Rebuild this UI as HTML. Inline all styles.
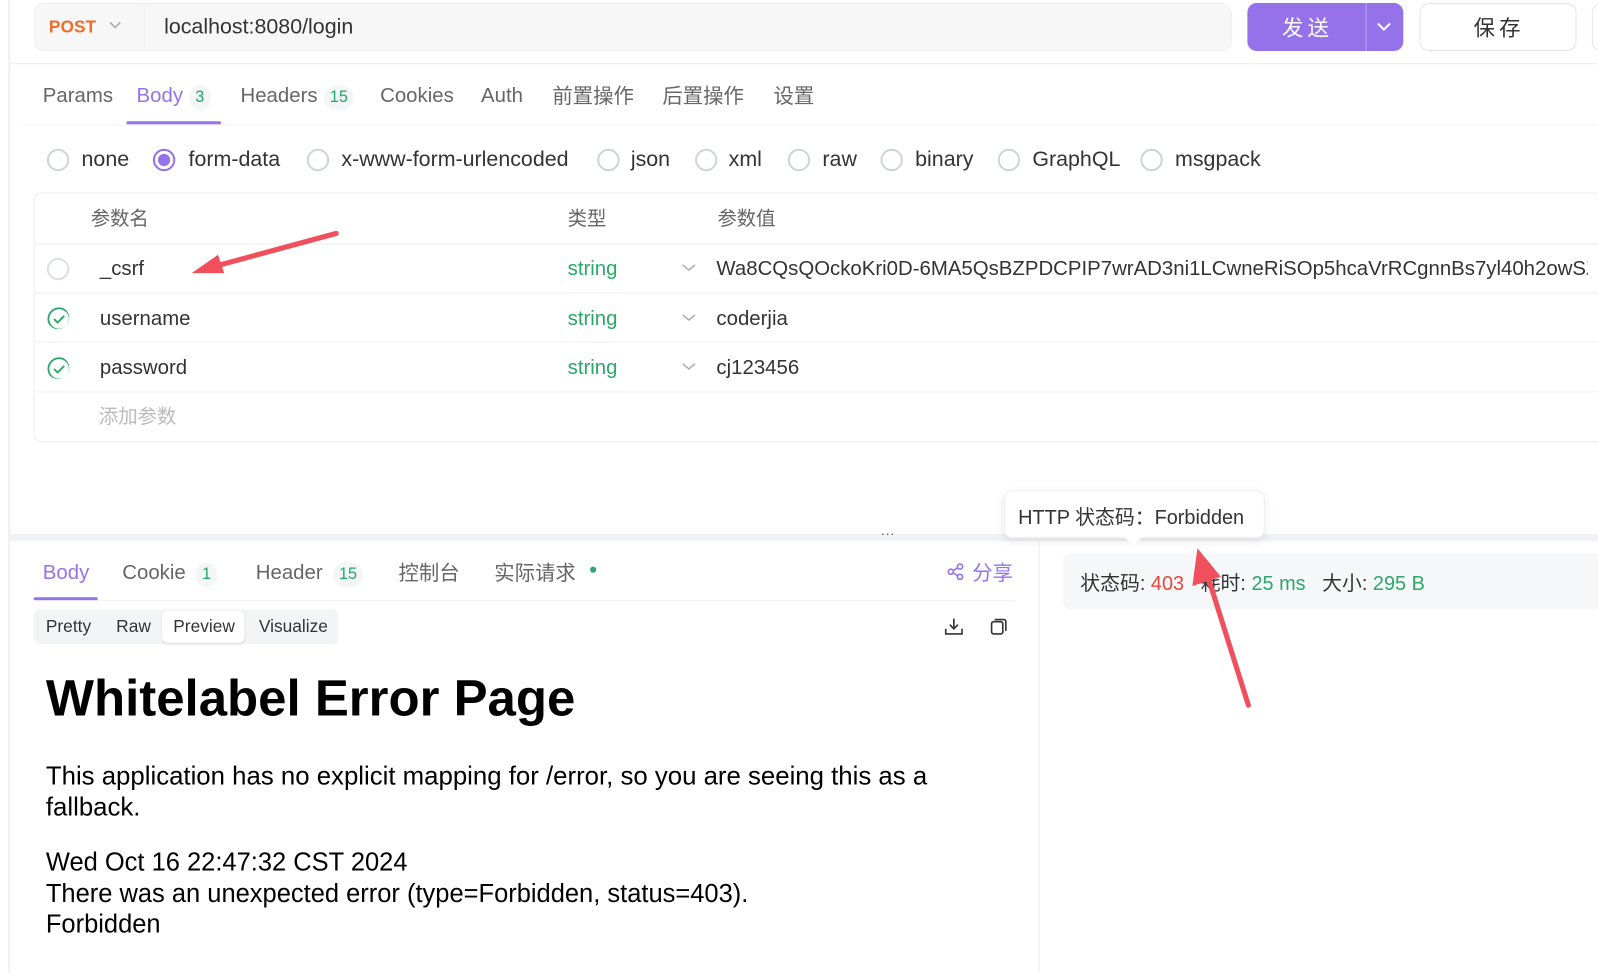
<!DOCTYPE html>
<html><head><meta charset="utf-8"><style>
*{box-sizing:border-box;margin:0;padding:0}
body{width:1598px;height:973px;overflow:hidden;background:#fff;font-family:"Liberation Sans","Noto Sans CJK SC",sans-serif;color:#333;position:relative}
#w{position:absolute;left:0;top:0;width:1568px;height:955px;transform:scale(1.0191);transform-origin:0 0;overflow:hidden}
.a{position:absolute;white-space:nowrap}
.g{color:#666}
.badge{display:inline-block;background:#f4f5f6;border-radius:12px;padding:0 6px;color:#22a86a;font-size:16px;margin-left:6px;line-height:24px}
.radio{position:absolute;width:22px;height:22px;border:2px solid #cfd3da;border-radius:50%}
.row{position:absolute;left:34px;width:1570px;border-top:1px solid #eceef1;height:48px}
.chk{position:absolute;width:22px;height:22px;border-radius:50%}
</style></head><body><div id="w">
<div class="a" style="left:8px;top:0;width:2px;height:973px;background:#eef0f2"></div>
<div class="a" style="left:33px;top:3px;width:1176px;height:47px;background:#f7f7f8;border-radius:10px;border:1px solid #f0f0f0"></div>
<div class="a" style="left:141px;top:3px;width:1px;height:47px;background:#ececec"></div>
<div class="a" style="left:48px;top:17px;font-size:17px;font-weight:bold;color:#f26b2a">POST</div>
<svg class="a" style="left:106px;top:20px" width="14" height="10"><path d="M2 2l5 5 5-5" stroke="#aaa" stroke-width="1.5" fill="none"/></svg>
<div class="a" style="left:161px;top:15px;font-size:21px;color:#333">localhost:8080/login</div>
<div class="a" style="left:1224px;top:3px;width:153px;height:47px;background:#9672ea;border-radius:9px"></div>
<div class="a" style="left:1340px;top:3px;width:1px;height:47px;background:#b9a2f2"></div>
<div class="a" style="left:1258px;top:12px;font-size:21px;color:#fff;letter-spacing:4px">发送</div>
<svg class="a" style="left:1350px;top:20px" width="16" height="12"><path d="M2 3l6 6 6-6" stroke="#fff" stroke-width="2" fill="none"/></svg>
<div class="a" style="left:1393px;top:3px;width:154px;height:47px;border:1px solid #e6e6e6;border-radius:9px"></div>
<div class="a" style="left:1446px;top:12px;font-size:21px;color:#333;letter-spacing:4px">保存</div>
<div class="a" style="left:1562px;top:3px;width:40px;height:47px;border:1px solid #e6e6e6;border-radius:9px"></div>
<div class="a" style="left:10px;top:62px;width:1600px;height:1px;background:#eeeeee"></div>
<div class="a g" style="left:42px;top:83px;font-size:20px">Params</div>
<div class="a" style="left:134px;top:83px;font-size:20px;color:#9672ea">Body<span class="badge">3</span></div>
<div class="a" style="left:124px;top:119px;width:93px;height:3px;background:#9672ea;border-radius:2px"></div>
<div class="a g" style="left:236px;top:83px;font-size:20px">Headers<span class="badge">15</span></div>
<div class="a g" style="left:373px;top:83px;font-size:20px">Cookies</div>
<div class="a g" style="left:472px;top:83px;font-size:20px">Auth</div>
<div class="a g" style="left:542px;top:78px;font-size:20px">前置操作</div>
<div class="a g" style="left:650px;top:78px;font-size:20px">后置操作</div>
<div class="a g" style="left:759px;top:78px;font-size:20px">设置</div>
<div class="a" style="left:22px;top:122px;width:1600px;height:1px;background:#eeeeee"></div>
<div class="radio" style="left:46px;top:146px"></div><div class="a" style="left:80px;top:145px;font-size:21px">none</div>
<div class="radio" style="left:150px;top:146px;border-color:#9672ea"><div style="margin:3px;width:12px;height:12px;border-radius:50%;background:#9672ea"></div></div><div class="a" style="left:185px;top:145px;font-size:21px">form-data</div>
<div class="radio" style="left:301px;top:146px"></div><div class="a" style="left:335px;top:145px;font-size:21px">x-www-form-urlencoded</div>
<div class="radio" style="left:586px;top:146px"></div><div class="a" style="left:619px;top:145px;font-size:21px">json</div>
<div class="radio" style="left:682px;top:146px"></div><div class="a" style="left:715px;top:145px;font-size:21px">xml</div>
<div class="radio" style="left:773px;top:146px"></div><div class="a" style="left:807px;top:145px;font-size:21px">raw</div>
<div class="radio" style="left:864px;top:146px"></div><div class="a" style="left:898px;top:145px;font-size:21px">binary</div>
<div class="radio" style="left:979px;top:146px"></div><div class="a" style="left:1013px;top:145px;font-size:21px">GraphQL</div>
<div class="radio" style="left:1119px;top:146px"></div><div class="a" style="left:1153px;top:145px;font-size:21px">msgpack</div>
<div class="a" style="left:33px;top:189px;width:1600px;height:245px;border:1px solid #eceef1;border-radius:8px"></div>
<div class="a g" style="left:89px;top:200px;font-size:19px">参数名</div>
<div class="a g" style="left:557px;top:200px;font-size:19px">类型</div>
<div class="a g" style="left:704px;top:200px;font-size:19px">参数值</div>
<div class="row" style="top:239px"></div><div class="row" style="top:287px"></div><div class="row" style="top:335px"></div><div class="row" style="top:384px"></div>
<div class="chk" style="left:46px;top:253px;border:2px solid #dcdfe4"></div>
<div class="a" style="left:98px;top:253px;font-size:20px">_csrf</div>
<div class="a" style="left:557px;top:253px;font-size:20px;color:#2aa86a">string</div>
<div class="a" style="left:703px;top:253px;font-size:20px;width:855px;overflow:hidden">Wa8CQsQOckoKri0D-6MA5QsBZPDCPIP7wrAD3ni1LCwneRiSOp5hcaVrRCgnnBs7yl40h2owSZKk</div>
<svg class="chk" style="left:46px;top:301px" width="24" height="24"><circle cx="12" cy="12" r="10.5" fill="none" stroke="#2aa86a" stroke-width="1.8"/><path d="M7 12l3.5 3.5L17 9" fill="none" stroke="#2aa86a" stroke-width="1.8"/></svg>
<div class="a" style="left:98px;top:302px;font-size:20px">username</div>
<div class="a" style="left:557px;top:302px;font-size:20px;color:#2aa86a">string</div>
<div class="a" style="left:703px;top:302px;font-size:20px">coderjia</div>
<svg class="chk" style="left:46px;top:350px" width="24" height="24"><circle cx="12" cy="12" r="10.5" fill="none" stroke="#2aa86a" stroke-width="1.8"/><path d="M7 12l3.5 3.5L17 9" fill="none" stroke="#2aa86a" stroke-width="1.8"/></svg>
<div class="a" style="left:98px;top:350px;font-size:20px">password</div>
<div class="a" style="left:557px;top:350px;font-size:20px;color:#2aa86a">string</div>
<div class="a" style="left:703px;top:350px;font-size:20px">cj123456</div>
<svg class="a" style="left:668px;top:258px" width="16" height="10"><path d="M2 2l6 5 6-5" stroke="#aaa" stroke-width="1.5" fill="none"/></svg>
<svg class="a" style="left:668px;top:307px" width="16" height="10"><path d="M2 2l6 5 6-5" stroke="#aaa" stroke-width="1.5" fill="none"/></svg>
<svg class="a" style="left:668px;top:355px" width="16" height="10"><path d="M2 2l6 5 6-5" stroke="#aaa" stroke-width="1.5" fill="none"/></svg>
<div class="a" style="left:97px;top:394px;font-size:19px;color:#bbb">添加参数</div>
<div class="a" style="left:10px;top:524px;width:1600px;height:7px;background:#f0f1f4"></div>
<div class="a" style="left:864px;top:515px;font-size:14px;color:#666">···</div>
<div class="a" style="left:1019px;top:531px;width:1px;height:450px;background:#eeeeee"></div>
<div class="a" style="left:42px;top:551px;font-size:20px;color:#9672ea">Body</div>
<div class="a" style="left:33px;top:586px;width:63px;height:3px;background:#9672ea;border-radius:2px"></div>
<div class="a g" style="left:120px;top:551px;font-size:20px">Cookie<span class="badge" style="margin-left:10px">1</span></div>
<div class="a g" style="left:251px;top:551px;font-size:20px">Header<span class="badge" style="margin-left:10px">15</span></div>
<div class="a g" style="left:391px;top:546px;font-size:20px">控制台</div>
<div class="a g" style="left:485px;top:546px;font-size:20px">实际请求</div>
<div class="a" style="left:579px;top:556px;width:6px;height:6px;border-radius:50%;background:#2aa86a"></div>
<svg class="a" style="left:929px;top:552px" width="18" height="18"><circle cx="13" cy="4" r="2.5" fill="none" stroke="#9672ea" stroke-width="1.6"/><circle cx="4" cy="9" r="2.5" fill="none" stroke="#9672ea" stroke-width="1.6"/><circle cx="13" cy="14" r="2.5" fill="none" stroke="#9672ea" stroke-width="1.6"/><path d="M6 8l5-3M6 10l5 3" stroke="#9672ea" stroke-width="1.6"/></svg>
<div class="a" style="left:954px;top:546px;font-size:20px;color:#9672ea">分享</div>
<div class="a" style="left:33px;top:589px;width:963px;height:1px;background:#eeeeee"></div>
<div class="a" style="left:33px;top:598px;width:299px;height:34px;background:#f3f4f5;border-radius:6px"></div>
<div class="a" style="left:159px;top:599px;width:81px;height:32px;background:#fff;border-radius:6px;box-shadow:0 1px 2px rgba(0,0,0,.1)"></div>
<div class="a" style="left:45px;top:605px;font-size:17px">Pretty</div>
<div class="a" style="left:114px;top:605px;font-size:17px">Raw</div>
<div class="a" style="left:170px;top:605px;font-size:17px">Preview</div>
<div class="a" style="left:254px;top:605px;font-size:17px">Visualize</div>
<svg class="a" style="left:926px;top:605px" width="20" height="20"><path d="M10 2v10M6 8l4 4 4-4M2 12v5h16v-5" fill="none" stroke="#333" stroke-width="1.6"/></svg>
<svg class="a" style="left:970px;top:605px" width="20" height="20"><rect x="3" y="5" width="11" height="12" rx="2" fill="none" stroke="#333" stroke-width="1.6"/><path d="M6 3h9a2 2 0 0 1 2 2v9" fill="none" stroke="#333" stroke-width="1.6"/></svg>
<div class="a" style="left:45px;top:656px;font-size:50px;font-weight:bold;color:#000">Whitelabel Error Page</div>
<div class="a" style="left:45px;top:747px;font-size:25.3px;color:#000;line-height:30px;white-space:normal;width:920px">This application has no explicit mapping for /error, so you are seeing this as a fallback.</div>
<div class="a" style="left:45px;top:831px;font-size:25px;color:#000;line-height:30.5px">Wed Oct 16 22:47:32 CST 2024<br>There was an unexpected error (type=Forbidden, status=403).<br>Forbidden</div>
<div class="a" style="left:1043px;top:543px;width:600px;height:55px;background:#f6f7f9;border-radius:8px"></div>
<div class="a" style="left:1060px;top:556px;font-size:19.5px">状态码: <span style="color:#e8463c">403</span>&nbsp;&nbsp;&nbsp;耗时: <span style="color:#2aa86a">25 ms</span>&nbsp;&nbsp;&nbsp;大小: <span style="color:#2aa86a">295 B</span></div>
<div class="a" style="left:985px;top:481px;width:256px;height:47px;background:#fff;border:1px solid #eee;border-radius:8px;box-shadow:0 3px 10px rgba(0,0,0,.08)"></div>
<div class="a" style="left:1106px;top:521px;width:12px;height:12px;background:#fff;transform:rotate(45deg)"></div>
<div class="a" style="left:999px;top:491px;font-size:19.5px">HTTP 状态码：Forbidden</div>
<svg class="a" style="left:0;top:0" width="1598" height="973">
<path d="M330 229L212 261" stroke="#f0505c" stroke-width="5" stroke-linecap="round"/>
<polygon points="188,268 214,250 220,268" fill="#f0505c"/>
<path d="M1225 692L1185 565" stroke="#f0505c" stroke-width="5" stroke-linecap="round"/>
<polygon points="1175,538 1170,575 1198,566" fill="#f0505c"/>
</svg>
</div></body></html>
